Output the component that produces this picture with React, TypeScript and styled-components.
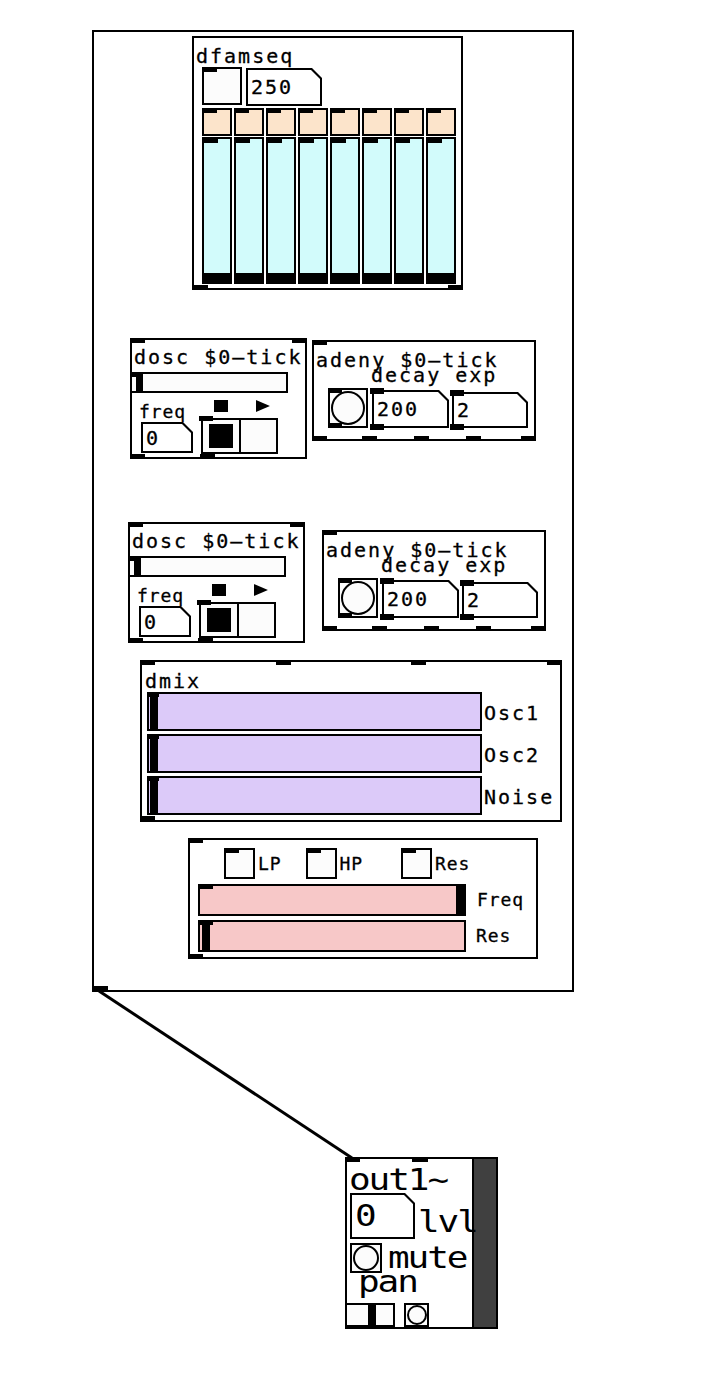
import React from "react";
import styled, { createGlobalStyle, css } from "styled-components";

const GlobalStyle = createGlobalStyle`
  html, body {
    margin: 0;
    padding: 0;
    background: #ffffff;
  }
`;

const INK = "#000000";
const IEM_BG = "#fcfcfc";
const PEACH = "#fce4cb";
const CYAN = "#d2fbfb";
const LAVENDER = "#dccaf9";
const ROSE = "#f7c8c8";

// s / m / l are the three patch font sizes; l is drawn a little wide, as the patch does
const fonts = {
  s: { size: 18, spacing: 0.9, lh: 20, stretch: 1, stroke: 0.3 },
  m: { size: 20, spacing: 2, lh: 20, stretch: 1, stroke: 0.3 },
  l: { size: 30, spacing: -1.73, lh: 24, stretch: 1.2, stroke: 0 },
};
type Size = keyof typeof fonts;

type Place = { $ml?: number; $mt?: number; $mb?: number };
const place = css<Place>`
  margin-left: ${(p) => p.$ml ?? 0}px;
  margin-top: ${(p) => p.$mt ?? 0}px;
  margin-bottom: ${(p) => p.$mb ?? 0}px;
`;

const Canvas = styled.div`
  position: relative;
  width: 722px;
  height: 1396px;
  background: #fff;
  overflow: hidden;
  color: ${INK};
  font-family: "DejaVu Sans Mono", "Liberation Mono", monospace;
`;

// a patch object or graph-on-parent box sitting on the canvas
const Box = styled.div<{ $x: number; $y: number; $w: number; $h: number; $row?: boolean }>`
  position: absolute;
  left: ${(p) => p.$x}px;
  top: ${(p) => p.$y}px;
  width: ${(p) => p.$w}px;
  height: ${(p) => p.$h}px;
  box-sizing: border-box;
  border: 2px solid ${INK};
  background: #fff;
  display: flex;
  flex-direction: ${(p) => (p.$row ? "row" : "column")};
  align-items: flex-start;
`;

// inlet / outlet nub
const Tab = styled.i<{ $side: "top" | "bottom"; $l?: number; $right?: boolean; $w?: number; $h?: number }>`
  position: absolute;
  ${(p) => p.$side}: -2px;
  ${(p) => (p.$right ? "right: -2px;" : `left: ${(p.$l ?? 0) - 2}px;`)}
  width: ${(p) => p.$w ?? 15}px;
  height: ${(p) => p.$h ?? 5}px;
  background: ${INK};
  z-index: 2;
`;

const Text = styled.span<Place & { $s?: Size; $lh?: number }>`
  display: block;
  flex: none;
  position: relative;
  z-index: 1;
  white-space: pre;
  font-size: ${(p) => fonts[p.$s ?? "m"].size}px;
  letter-spacing: ${(p) => fonts[p.$s ?? "m"].spacing}px;
  line-height: ${(p) => p.$lh ?? fonts[p.$s ?? "m"].lh}px;
  -webkit-text-stroke: ${(p) => fonts[p.$s ?? "m"].stroke}px ${INK};
  transform: scaleX(${(p) => fonts[p.$s ?? "m"].stretch});
  transform-origin: left center;
  ${place}
`;

const Row = styled.div<Place & { $gap?: number; $align?: string }>`
  display: flex;
  flex: none;
  align-items: ${(p) => p.$align ?? "flex-start"};
  gap: ${(p) => p.$gap ?? 0}px;
  ${place}
`;

const Toggle = styled.div<Place & { $w: number; $h: number; $bg?: string }>`
  position: relative;
  flex: none;
  box-sizing: border-box;
  width: ${(p) => p.$w}px;
  height: ${(p) => p.$h}px;
  border: 2px solid ${INK};
  background: ${(p) => p.$bg ?? IEM_BG};
  ${place}
`;

const Bang = styled(Toggle)`
  display: flex;
  align-items: center;
  justify-content: center;
`;

const Ring = styled.span<{ $d: number }>`
  width: ${(p) => p.$d}px;
  height: ${(p) => p.$d}px;
  box-sizing: border-box;
  border: 2px solid ${INK};
  border-radius: 50%;
`;

const Slider = styled(Toggle)`
  overflow: hidden;
`;

const HKnob = styled.span<{ $at: number; $w: number }>`
  position: absolute;
  top: 0;
  bottom: 0;
  left: ${(p) => p.$at}px;
  width: ${(p) => p.$w}px;
  background: ${INK};
`;

const VKnob = styled.span`
  position: absolute;
  left: 0;
  right: 0;
  bottom: 0;
  height: 9px;
  background: ${INK};
`;

const NumBox = styled.div<Place & { $w: number; $h: number; $pt?: number }>`
  position: relative;
  flex: none;
  box-sizing: border-box;
  width: ${(p) => p.$w}px;
  height: ${(p) => p.$h}px;
  padding: ${(p) => p.$pt ?? 0}px 0 0 5px;
  display: flex;
  align-items: center;
  ${place}
  &::before {
    content: "";
    position: absolute;
    inset: 0;
    background: ${INK};
    clip-path: polygon(0 0, calc(100% - 10px) 0, 100% 10px, 100% 100%, 0 100%);
  }
  &::after {
    content: "";
    position: absolute;
    inset: 2px;
    background: #fff;
    clip-path: polygon(0 0, calc(100% - 9px) 0, 100% 9px, 100% 100%, 0 100%);
  }
`;

const Radio = styled.div<Place>`
  position: relative;
  display: flex;
  flex: none;
  ${place}
`;

const RadioCell = styled.div<{ $w: number; $h: number; $first?: boolean }>`
  box-sizing: border-box;
  width: ${(p) => p.$w}px;
  height: ${(p) => p.$h}px;
  margin-left: ${(p) => (p.$first ? 0 : -2)}px;
  border: 2px solid ${INK};
  background: ${IEM_BG};
  display: flex;
  align-items: center;
  justify-content: center;
`;

const RadioMark = styled.span`
  width: 24px;
  height: 24px;
  background: ${INK};
`;

const StopGlyph = styled.span<Place>`
  display: block;
  flex: none;
  width: 14px;
  height: 12px;
  background: ${INK};
  ${place}
`;

const PlayGlyph = styled(StopGlyph)`
  clip-path: polygon(0 0, 100% 50%, 0 100%);
`;

const SeqGrid = styled.div`
  display: grid;
  grid-template-columns: repeat(8, 30px);
  grid-template-rows: 28px 147px;
  column-gap: 2px;
  row-gap: 1px;
  margin: 2px 0 0 8px;
`;

const OutColumn = styled.div`
  display: flex;
  flex-direction: column;
  align-items: flex-start;
  width: 125px;
  height: 100%;
`;

const Meter = styled.div`
  flex: 1;
  align-self: stretch;
  border-left: 2px solid ${INK};
  background: #404040;
`;

const Wire = styled.svg`
  position: absolute;
  left: 0;
  top: 0;
  width: 722px;
  height: 1396px;
  pointer-events: none;
`;

const steps = [0, 1, 2, 3, 4, 5, 6, 7];

const Dosc: React.FC<{ x: number; y: number }> = ({ x, y }) => (
  <Box $x={x} $y={y} $w={177} $h={121}>
    <Tab $side="top" />
    <Tab $side="top" $right />
    <Tab $side="bottom" />
    <Tab $side="bottom" $l={70} />
    <Text $mt={7} $ml={2}>dosc $0–tick</Text>
    <Slider $w={158} $h={21} $ml={-2} $mt={5}>
      <Tab $side="top" $w={12} />
      <HKnob $at={4} $w={7} />
    </Slider>
    <Row $mt={9}>
      <Text $s="s" $ml={7}>freq</Text>
      <StopGlyph $ml={28} $mt={-2} />
      <PlayGlyph $ml={28} $mt={-2} />
    </Row>
    <Row>
      <NumBox $w={52} $h={31} $ml={9}>
        <Text>0</Text>
      </NumBox>
      <Radio $ml={8} $mt={-4}>
        <Tab $side="top" $w={14} />
        <RadioCell $w={40} $h={36} $first>
          <RadioMark />
        </RadioCell>
        <RadioCell $w={39} $h={36} />
      </Radio>
    </Row>
  </Box>
);

const Adeny: React.FC<{ x: number; y: number }> = ({ x, y }) => (
  <Box $x={x} $y={y} $w={224} $h={101}>
    <Tab $side="top" />
    {[0, 50, 102, 154].map((l) => (
      <Tab key={l} $side="bottom" $l={l} />
    ))}
    <Tab $side="bottom" $right />
    <Text $mt={10} $ml={2} $lh={16}>adeny $0–tick</Text>
    <Text $ml={57} $lh={14}>decay exp</Text>
    <Row $mt={6}>
      <Bang $w={40} $h={40} $ml={14}>
        <Tab $side="top" $w={14} />
        <Tab $side="bottom" $w={14} />
        <Ring $d={34} />
      </Bang>
      <NumBox $w={77} $h={38} $ml={4} $mt={2}>
        <Tab $side="top" $w={14} $h={6} />
        <Tab $side="bottom" $w={14} $h={6} />
        <Text>200</Text>
      </NumBox>
      <NumBox $w={76} $h={36} $ml={3} $mt={4}>
        <Tab $side="top" $w={14} $h={6} />
        <Tab $side="bottom" $w={14} $h={6} />
        <Text>2</Text>
      </NumBox>
    </Row>
  </Box>
);

const mixRows = ["Osc1", "Osc2", "Noise"];

const App: React.FC = () => {
  return (
    <Canvas>
      <GlobalStyle />
      <Box $x={92} $y={30} $w={482} $h={962}>
        <Tab $side="bottom" $w={16} $h={6} />

        <Box $x={98} $y={4} $w={271} $h={254}>
          <Tab $side="bottom" $w={16} />
          <Tab $side="bottom" $right />
          <Text $mt={8} $ml={2}>dfamseq</Text>
          <Row $ml={8} $mt={1} $gap={4}>
            <Toggle $w={40} $h={38}>
              <Tab $side="top" $w={15} />
            </Toggle>
            <NumBox $w={76} $h={38} $mt={1}>
              <Text>250</Text>
            </NumBox>
          </Row>
          <SeqGrid>
            {steps.map((i) => (
              <Toggle key={`t${i}`} $w={30} $h={28} $bg={PEACH}>
                <Tab $side="top" $w={15} />
              </Toggle>
            ))}
            {steps.map((i) => (
              <Slider key={`s${i}`} $w={30} $h={147} $bg={CYAN}>
                <Tab $side="top" $w={16} $h={6} />
                <VKnob />
              </Slider>
            ))}
          </SeqGrid>
        </Box>

        <Dosc x={36} y={306} />
        <Adeny x={218} y={308} />
        <Dosc x={34} y={490} />
        <Adeny x={228} y={498} />

        <Box $x={46} $y={628} $w={422} $h={162}>
          {[0, 136, 271].map((l) => (
            <Tab key={l} $side="top" $l={l} />
          ))}
          <Tab $side="top" $right />
          <Tab $side="bottom" $h={6} />
          <Text $mt={9} $ml={3}>dmix</Text>
          {mixRows.map((name, i) => (
            <Row key={name} $ml={5} $mt={i === 0 ? 1 : 3} $gap={2} $align="center">
              <Slider $w={335} $h={39} $bg={LAVENDER}>
                <Tab $side="top" $w={12} />
                <HKnob $at={1} $w={8} />
              </Slider>
              <Text $mt={2}>{name}</Text>
            </Row>
          ))}
        </Box>

        <Box $x={94} $y={806} $w={350} $h={121}>
          <Tab $side="top" />
          <Tab $side="bottom" />
          <Row $mt={8} $align="center">
            <Toggle $w={31} $h={31} $ml={34}>
              <Tab $side="top" $w={15} />
            </Toggle>
            <Text $s="s" $ml={3}>LP</Text>
            <Toggle $w={31} $h={31} $ml={25}>
              <Tab $side="top" $w={15} />
            </Toggle>
            <Text $s="s" $ml={2}>HP</Text>
            <Toggle $w={31} $h={31} $ml={38}>
              <Tab $side="top" $w={15} />
            </Toggle>
            <Text $s="s" $ml={3}>Res</Text>
          </Row>
          <Row $mt={5} $ml={8} $align="center">
            <Slider $w={268} $h={32} $bg={ROSE}>
              <Tab $side="top" $w={15} />
              <HKnob $at={256} $w={8} />
            </Slider>
            <Text $s="s" $ml={11}>Freq</Text>
          </Row>
          <Row $mt={4} $ml={8} $align="center">
            <Slider $w={268} $h={32} $bg={ROSE}>
              <Tab $side="top" $w={15} />
              <HKnob $at={2} $w={8} />
            </Slider>
            <Text $s="s" $ml={10}>Res</Text>
          </Row>
        </Box>
      </Box>

      <Box $x={345} $y={1157} $w={153} $h={172} $row>
        <Tab $side="top" />
        <Tab $side="top" $l={67} $w={16} />
        <OutColumn>
          <Text $s="l" $mt={9} $ml={2}>out1~</Text>
          <Row $align="flex-end" $mt={1}>
            <NumBox $w={65} $h={46} $ml={3}>
              <Text $s="l">0</Text>
            </NumBox>
            <Text $s="l" $ml={3} $mb={5}>lvl</Text>
          </Row>
          <Row $align="center" $mt={4}>
            <Bang $w={32} $h={30} $ml={3}>
              <Ring $d={26} />
            </Bang>
            <Text $s="l" $ml={6}>mute</Text>
          </Row>
          <Text $s="l" $ml={11} $lh={18}>pan</Text>
          <Row $mt={12}>
            <Slider $w={50} $h={24} $ml={-2}>
              <HKnob $at={21} $w={8} />
            </Slider>
            <Bang $w={25} $h={24} $ml={9}>
              <Ring $d={20} />
            </Bang>
          </Row>
        </OutColumn>
        <Meter />
      </Box>

      <Wire viewBox="0 0 722 1396">
        <line x1={99} y1={991} x2={352} y2={1158} stroke={INK} strokeWidth={3} />
      </Wire>
    </Canvas>
  );
};

export default App;
